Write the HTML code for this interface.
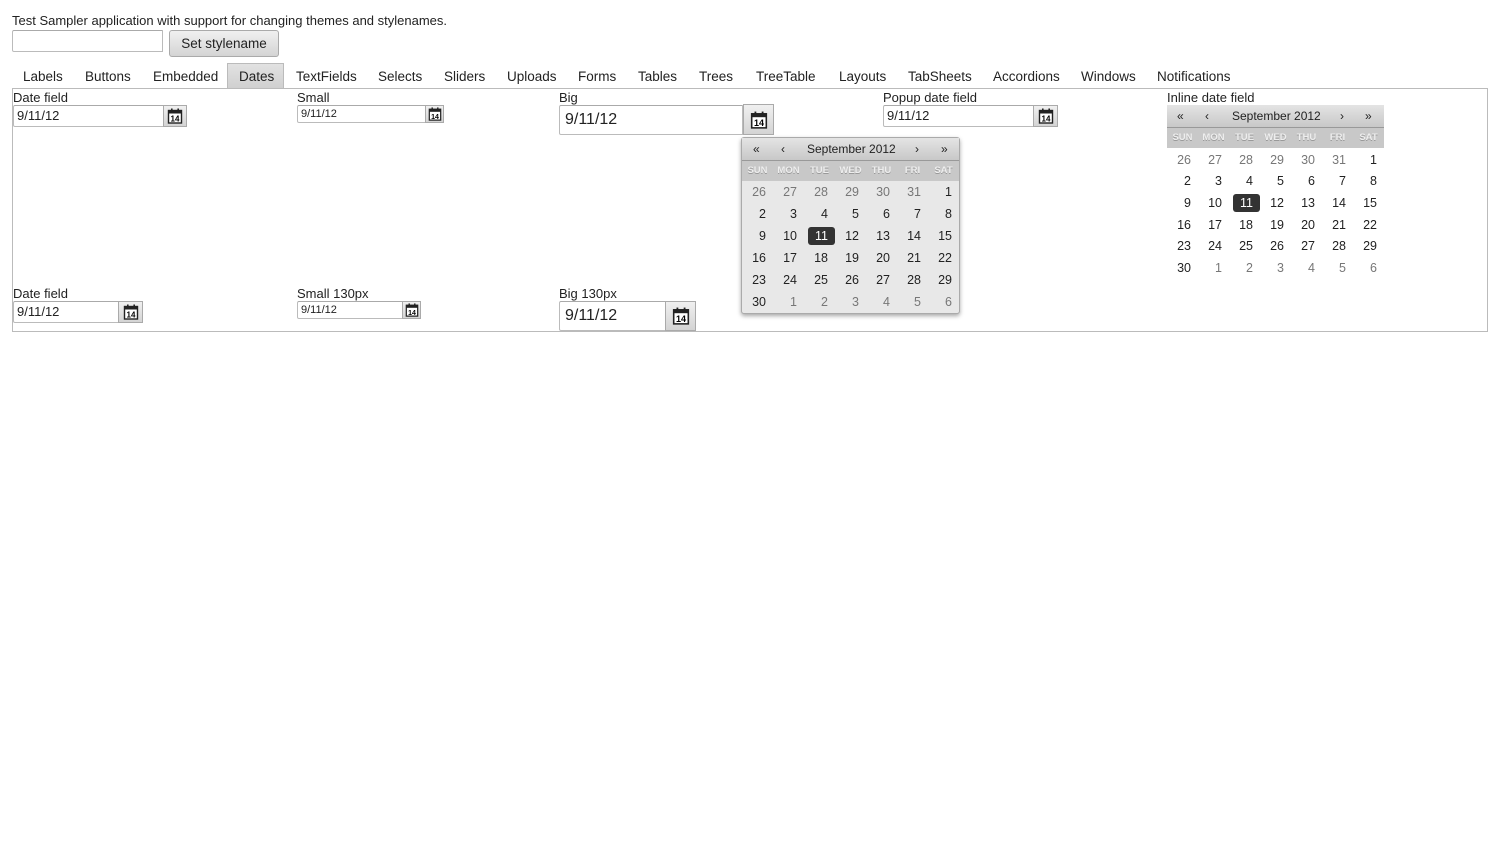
<!DOCTYPE html>
<html><head><meta charset="utf-8"><style>
*{box-sizing:border-box}
body{margin:0;width:1500px;height:850px;background:#fff;font-family:"Liberation Sans",Arial,sans-serif;font-size:13px;color:#222;position:relative;overflow:hidden}
.a{position:absolute}
.inp{position:absolute;border:1px solid #bbb;border-top-color:#aaa;background:#fff;padding-left:3px;color:#222;border-radius:2px 0 0 2px}
.btn{position:absolute;border:1px solid #aaa;background:linear-gradient(#f0f0f0,#d4d4d4);display:flex;align-items:center;justify-content:center}
.tabs span{position:absolute;top:69px;font-size:13.5px;color:#222}
.cal{position:absolute;font-size:12px}
.cal .hd{height:23px;background:linear-gradient(#e4e4e4,#c8c8c8);border-bottom:1px solid #999;position:relative}
.cal .hd span{position:absolute;top:4px}
.cal .wd{height:20px;background:#c8c8c8;position:relative;font-size:9.5px;font-weight:bold;color:#eee;text-shadow:0 1px 0 #999}
.cal .wd span{position:absolute;top:4px;width:31px;text-align:center}
.cal table{border-collapse:collapse;margin-top:0}
.cal td{width:31px;text-align:right;padding:0 7px 0 0;font-size:12.5px;color:#222}
.cal td.o{color:#777}
.cal td.s{padding-right:0}
.cal td.s span{display:inline-block;background:#333;color:#fff;width:27px;border-radius:3px;line-height:18px;text-align:right;padding-right:7px}
</style></head><body>
<div class="a" style="left:12px;top:13px;font-size:13px">Test Sampler application with support for changing themes and stylenames.</div>
<div class="inp" style="left:12px;top:30px;width:151px;height:22px"></div>
<div class="btn" style="left:169px;top:30px;width:110px;height:27px;border-radius:3px;font-size:13.5px;color:#222">Set stylename</div>

<div class="a" style="left:227px;top:63px;width:57px;height:26px;background:linear-gradient(#e2e2e2,#cfcfcf);border:1px solid #bbb;border-bottom:none"></div>
<div class="tabs">
<span style="left:23px">Labels</span><span style="left:85px">Buttons</span><span style="left:153px">Embedded</span><span style="left:239px">Dates</span><span style="left:296px">TextFields</span><span style="left:378px">Selects</span><span style="left:444px">Sliders</span><span style="left:507px">Uploads</span><span style="left:578px">Forms</span><span style="left:638px">Tables</span><span style="left:699px">Trees</span><span style="left:756px">TreeTable</span><span style="left:839px">Layouts</span><span style="left:908px">TabSheets</span><span style="left:993px">Accordions</span><span style="left:1081px">Windows</span><span style="left:1157px">Notifications</span>
</div>
<div class="a" style="left:12px;top:88px;width:1476px;height:244px;border:1px solid #bbb"></div>

<svg width="0" height="0" style="position:absolute"><defs><symbol id="ic" viewBox="0 0 16 16"><rect x="1.5" y="2.5" width="13" height="12.5" fill="#fff" stroke="#222" stroke-width="1.4"/><rect x="1.5" y="2.5" width="13" height="3" fill="#222"/><rect x="4" y="0.5" width="1.6" height="3.5" fill="#222"/><rect x="10.4" y="0.5" width="1.6" height="3.5" fill="#222"/></symbol></defs></svg>

<!-- Row 1 -->
<div class="a" style="left:13px;top:90px">Date field</div>
<div class="inp" style="left:13px;top:105px;width:151px;height:22px;font-size:13px;line-height:20px">9/11/12</div>
<div class="btn" style="left:163px;top:105px;width:24px;height:22px"><svg width="16" height="16"><use href="#ic"/><text x="8" y="13.5" font-size="8" font-weight="bold" text-anchor="middle" font-family="Liberation Sans">14</text></svg></div>

<div class="a" style="left:297px;top:90px">Small</div>
<div class="inp" style="left:297px;top:105px;width:129px;height:18px;font-size:11px;line-height:16px">9/11/12</div>
<div class="btn" style="left:425px;top:105px;width:19px;height:18px"><svg width="14" height="14" viewBox="0 0 16 16"><use href="#ic"/><text x="8" y="13.5" font-size="8" font-weight="bold" text-anchor="middle" font-family="Liberation Sans">14</text></svg></div>

<div class="a" style="left:559px;top:90px">Big</div>
<div class="inp" style="left:559px;top:105px;width:184px;height:30px;font-size:16px;line-height:28px;padding-left:5px">9/11/12</div>
<div class="btn" style="left:743px;top:104px;width:31px;height:31px"><svg width="18" height="18" viewBox="0 0 16 16"><use href="#ic"/><text x="8" y="13.5" font-size="8" font-weight="bold" text-anchor="middle" font-family="Liberation Sans">14</text></svg></div>

<div class="a" style="left:883px;top:90px">Popup date field</div>
<div class="inp" style="left:883px;top:105px;width:151px;height:22px;line-height:20px">9/11/12</div>
<div class="btn" style="left:1033px;top:105px;width:25px;height:22px"><svg width="16" height="16"><use href="#ic"/><text x="8" y="13.5" font-size="8" font-weight="bold" text-anchor="middle" font-family="Liberation Sans">14</text></svg></div>

<div class="a" style="left:1167px;top:90px">Inline date field</div>

<!-- Row 2 -->
<div class="a" style="left:13px;top:286px">Date field</div>
<div class="inp" style="left:13px;top:301px;width:106px;height:22px;line-height:20px">9/11/12</div>
<div class="btn" style="left:118px;top:301px;width:25px;height:22px"><svg width="16" height="16"><use href="#ic"/><text x="8" y="13.5" font-size="8" font-weight="bold" text-anchor="middle" font-family="Liberation Sans">14</text></svg></div>

<div class="a" style="left:297px;top:286px">Small 130px</div>
<div class="inp" style="left:297px;top:301px;width:106px;height:18px;font-size:11px;line-height:16px">9/11/12</div>
<div class="btn" style="left:402px;top:301px;width:19px;height:18px"><svg width="14" height="14" viewBox="0 0 16 16"><use href="#ic"/><text x="8" y="13.5" font-size="8" font-weight="bold" text-anchor="middle" font-family="Liberation Sans">14</text></svg></div>

<div class="a" style="left:559px;top:286px">Big 130px</div>
<div class="inp" style="left:559px;top:301px;width:107px;height:30px;font-size:16px;line-height:28px;padding-left:5px">9/11/12</div>
<div class="btn" style="left:665px;top:301px;width:31px;height:30px"><svg width="18" height="18" viewBox="0 0 16 16"><use href="#ic"/><text x="8" y="13.5" font-size="8" font-weight="bold" text-anchor="middle" font-family="Liberation Sans">14</text></svg></div>

<!-- Popup calendar -->
<div class="cal" style="left:741px;top:137px;width:219px;height:177px;background:#e8e8e8;border:1px solid #aaa;border-radius:3px;box-shadow:0 2px 4px rgba(0,0,0,.35)">
<div class="hd"><span style="left:11px">«</span><span style="left:39px">‹</span><span style="left:65px">September 2012</span><span style="left:173px">›</span><span style="left:199px">»</span></div>
<div class="wd"><span style="left:0">SUN</span><span style="left:31px">MON</span><span style="left:62px">TUE</span><span style="left:93px">WED</span><span style="left:124px">THU</span><span style="left:155px">FRI</span><span style="left:186px">SAT</span></div>
<table>
<tr style="height:22px"><td class="o">26</td><td class="o">27</td><td class="o">28</td><td class="o">29</td><td class="o">30</td><td class="o">31</td><td>1</td></tr>
<tr style="height:22px"><td>2</td><td>3</td><td>4</td><td>5</td><td>6</td><td>7</td><td>8</td></tr>
<tr style="height:22px"><td>9</td><td>10</td><td class="s"><span>11</span></td><td>12</td><td>13</td><td>14</td><td>15</td></tr>
<tr style="height:22px"><td>16</td><td>17</td><td>18</td><td>19</td><td>20</td><td>21</td><td>22</td></tr>
<tr style="height:22px"><td>23</td><td>24</td><td>25</td><td>26</td><td>27</td><td>28</td><td>29</td></tr>
<tr style="height:22px"><td>30</td><td class="o">1</td><td class="o">2</td><td class="o">3</td><td class="o">4</td><td class="o">5</td><td class="o">6</td></tr>
</table></div>

<!-- Inline calendar -->
<div class="cal" style="left:1167px;top:105px;width:217px">
<div class="hd"><span style="left:10px">«</span><span style="left:38px">‹</span><span style="left:65px">September 2012</span><span style="left:173px">›</span><span style="left:198px">»</span></div>
<div class="wd"><span style="left:0">SUN</span><span style="left:31px">MON</span><span style="left:62px">TUE</span><span style="left:93px">WED</span><span style="left:124px">THU</span><span style="left:155px">FRI</span><span style="left:186px">SAT</span></div>
<table style="margin-top:1px">
<tr style="height:21.6px"><td class="o">26</td><td class="o">27</td><td class="o">28</td><td class="o">29</td><td class="o">30</td><td class="o">31</td><td>1</td></tr>
<tr style="height:21.6px"><td>2</td><td>3</td><td>4</td><td>5</td><td>6</td><td>7</td><td>8</td></tr>
<tr style="height:21.6px"><td>9</td><td>10</td><td class="s"><span>11</span></td><td>12</td><td>13</td><td>14</td><td>15</td></tr>
<tr style="height:21.6px"><td>16</td><td>17</td><td>18</td><td>19</td><td>20</td><td>21</td><td>22</td></tr>
<tr style="height:21.6px"><td>23</td><td>24</td><td>25</td><td>26</td><td>27</td><td>28</td><td>29</td></tr>
<tr style="height:21.6px"><td>30</td><td class="o">1</td><td class="o">2</td><td class="o">3</td><td class="o">4</td><td class="o">5</td><td class="o">6</td></tr>
</table></div>
</body></html>
